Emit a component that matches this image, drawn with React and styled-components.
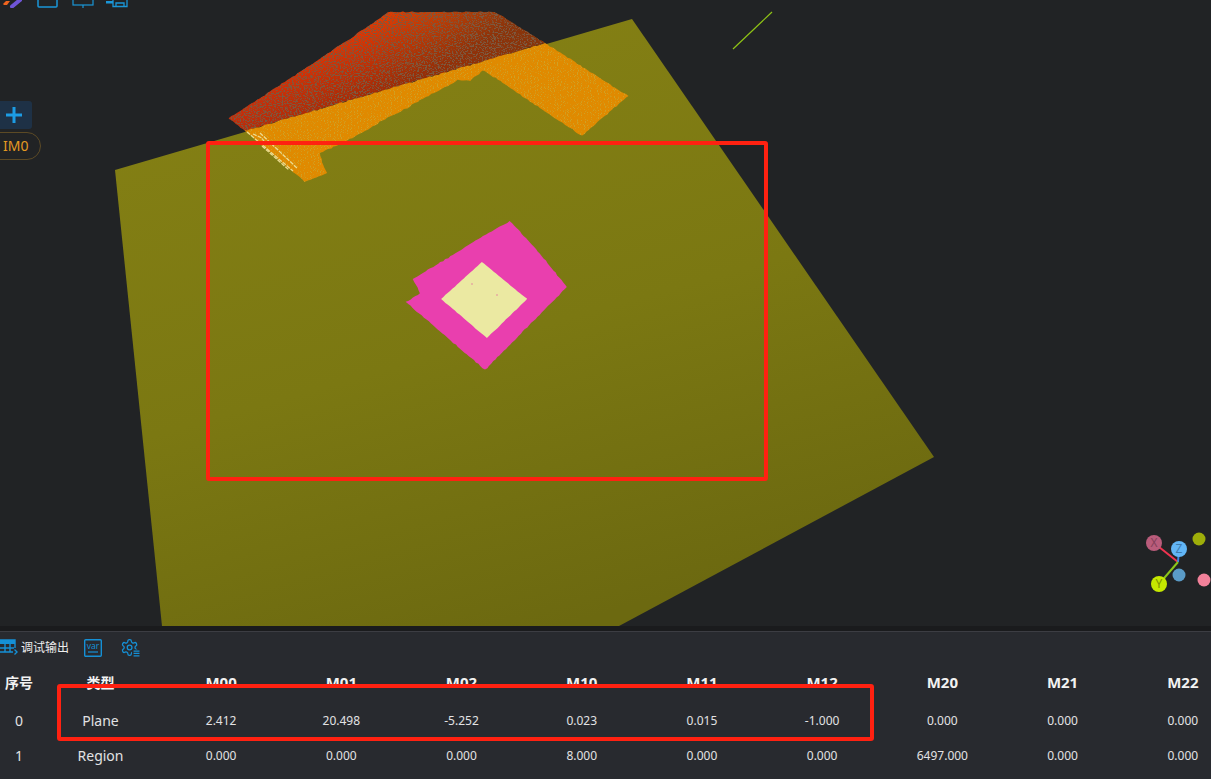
import React from 'react';
import styled, { createGlobalStyle } from 'styled-components';

const GlobalStyle = createGlobalStyle`
  html, body {
    margin: 0;
    padding: 0;
    height: 100%;
    overflow: hidden;
    background: #212325;
  }
  #root {
    height: 100%;
  }
`;

const Page = styled.div`
  display: flex;
  flex-direction: column;
  height: 779px;
  font-family: 'Noto Sans', 'Noto Sans CJK SC', sans-serif;
  color: #e4e4e6;
`;

const Viewport = styled.div`
  position: relative;
  height: 626px;
  flex: none;
  overflow: hidden;
  background: #212325;
`;

const SceneSvg = styled.svg`
  display: block;
  width: 100%;
  height: 100%;
`;

const Toolbar = styled.div`
  position: absolute;
  top: -16px;
  left: 0;
  display: flex;
  align-items: flex-end;
`;

const ToolIcon = styled.svg`
  display: block;
  flex: none;
  margin-left: ${({ $gap }) => $gap}px;
  color: #1a96d8;
`;

const AddButton = styled.button`
  position: absolute;
  left: 0;
  top: 101px;
  width: 32px;
  height: 28px;
  padding: 0 4px 0 0;
  border: 0;
  border-radius: 0 3px 3px 0;
  background: #1e3146;
  display: flex;
  align-items: center;
  justify-content: center;
`;

const ImagePill = styled.div`
  position: absolute;
  left: -20px;
  top: 132px;
  width: 61px;
  height: 28px;
  box-sizing: border-box;
  padding-left: 22px;
  border: 1px solid #5c4a25;
  border-radius: 14px;
  font-size: 14px;
  line-height: 26px;
  color: #e59a22;
`;

const Annotation = styled.div`
  position: absolute;
  left: ${({ $x }) => $x}px;
  top: ${({ $y }) => $y}px;
  width: ${({ $w }) => $w}px;
  height: ${({ $h }) => $h}px;
  box-sizing: border-box;
  border: 4px solid #ff2111;
  border-radius: 3px;
  pointer-events: none;
`;

const Divider = styled.div`
  flex: none;
  height: 5px;
  background: #1a1b1d;
`;

const Panel = styled.section`
  position: relative;
  flex: 1;
  min-height: 0;
  overflow: hidden;
  border-top: 1px solid #3c3d43;
  background: #282a2f;
`;

const Tabs = styled.div`
  display: flex;
  align-items: center;
  height: 29px;
  padding-top: 2px;
  box-sizing: border-box;
`;

const TabLabel = styled.span`
  margin-left: 3px;
  font-size: 12px;
  line-height: 16px;
  color: #eeeeee;
`;

const TabIcon = styled.svg`
  display: block;
  flex: none;
  margin-left: ${({ $gap }) => $gap || 0}px;
  color: #1590d6;
`;

const DataTable = styled.table`
  table-layout: fixed;
  width: 1243px;
  border-collapse: collapse;
  border-spacing: 0;

  th {
    height: 42px;
    padding: 0;
    font-size: 15px;
    font-weight: 700;
    color: #f2f2f2;
    text-align: center;
  }

  th.small {
    font-size: 14px;
  }

  td {
    height: 35px;
    padding: 0;
    font-size: 12px;
    color: #e2e2e4;
    text-align: center;
  }

  td.large {
    font-size: 14px;
  }

  th.shifted,
  td.shifted {
    padding-left: 2px;
  }
`;

const columns = [
  { name: '序号', width: 38, key: 'index', large: true },
  { name: '类型', width: 123, key: 'type', large: true, shifted: true },
  ...['M00', 'M01', 'M02', 'M10', 'M11', 'M12', 'M20', 'M21', 'M22'].map((name) => ({
    name,
    width: 120.2,
    key: name,
  })),
];

const rows = [
  {
    index: 0,
    type: 'Plane',
    M00: '2.412',
    M01: '20.498',
    M02: '-5.252',
    M10: '0.023',
    M11: '0.015',
    M12: '-1.000',
    M20: '0.000',
    M21: '0.000',
    M22: '0.000',
  },
  {
    index: 1,
    type: 'Region',
    M00: '0.000',
    M01: '0.000',
    M02: '0.000',
    M10: '8.000',
    M11: '0.000',
    M12: '0.000',
    M20: '6497.000',
    M21: '0.000',
    M22: '0.000',
  },
];

// roughen a polygon's edges so it reads like scanned point cloud data
const jagged = (points, amp, seed = 1) => {
  let s = seed;
  const rnd = () => {
    s = (s * 16807) % 2147483647;
    return s / 2147483647 - 0.5;
  };
  const out = [];
  points.forEach((p, i) => {
    const q = points[(i + 1) % points.length];
    const steps = Math.max(1, Math.round(Math.hypot(q[0] - p[0], q[1] - p[1]) / 3));
    for (let k = 0; k < steps; k++) {
      const t = k / steps;
      out.push(`${(p[0] + (q[0] - p[0]) * t + rnd() * amp).toFixed(1)},${(p[1] + (q[1] - p[1]) * t + rnd() * amp).toFixed(1)}`);
    }
  });
  return out.join(' ');
};

const PLANE = '115,170 632,19 934,457 619,626 162,626';
const RED_SCAN = jagged(
  [[229, 118], [300, 72], [345, 42], [373, 23], [388, 12], [495, 12], [545, 43], [245, 131]],
  0.9,
  7
);
const ORANGE_SCAN = jagged(
  [[245, 131], [545, 43], [628, 96], [582, 136], [483, 70], [470, 81], [458, 80], [440, 90], [420, 100], [407, 108], [385, 119], [370, 128], [345, 142], [320, 153], [323, 165], [327, 173], [305, 182]],
  1.1,
  23
);
const PINK_SCAN = jagged(
  [[510, 221], [536, 249], [567, 287], [485, 370], [406, 302], [420, 293], [413, 279], [443, 261], [478, 239]],
  0.8,
  41
);
const PALE_SCAN = jagged([[482, 262], [527, 299], [487, 338], [441, 299]], 0.4, 11);

const Scene = () => (
  <SceneSvg viewBox="0 0 1211 626">
    <defs>
      <linearGradient id="plane" gradientUnits="userSpaceOnUse" x1="400" y1="60" x2="560" y2="626">
        <stop offset="0" stopColor="#837f14" />
        <stop offset="0.5" stopColor="#7b7812" />
        <stop offset="1" stopColor="#6c6910" />
      </linearGradient>
      <linearGradient id="red" gradientUnits="userSpaceOnUse" x1="230" y1="120" x2="545" y2="40">
        <stop offset="0" stopColor="#d8300a" />
        <stop offset="0.45" stopColor="#ee3802" />
        <stop offset="0.7" stopColor="#e84a02" />
        <stop offset="1" stopColor="#c8560a" />
      </linearGradient>
      <linearGradient id="redShade" gradientUnits="userSpaceOnUse" x1="325" y1="35" x2="370" y2="110">
        <stop offset="0" stopColor="#5a1f0c" stopOpacity="0" />
        <stop offset="1" stopColor="#5a1f0c" stopOpacity="0.6" />
      </linearGradient>
      <filter id="speckleDark" x="0" y="0" width="100%" height="100%">
        <feTurbulence type="fractalNoise" baseFrequency="0.55 1.1" numOctaves="2" seed="4" />
        <feColorMatrix values="0 0 0 0 0.2  0 0 0 0 0.1  0 0 0 0 0.05  8 0 0 0 -4" />
      </filter>
      <filter id="speckleGreen" x="0" y="0" width="100%" height="100%">
        <feTurbulence type="fractalNoise" baseFrequency="0.7 1" numOctaves="2" seed="9" />
        <feColorMatrix values="0 0 0 0 0.5  0 0 0 0 0.5  0 0 0 0 0.08  9 0 0 0 -5" />
      </filter>
      <clipPath id="redClip">
        <polygon points={RED_SCAN} />
      </clipPath>
      <clipPath id="orangeClip">
        <polygon points={ORANGE_SCAN} />
      </clipPath>
    </defs>

    <polygon points={RED_SCAN} fill="url(#red)" />
    <polygon points={RED_SCAN} fill="url(#redShade)" />
    <g clipPath="url(#redClip)">
      <rect x="225" y="10" width="325" height="125" filter="url(#speckleDark)" />
    </g>

    <polygon points={PLANE} fill="url(#plane)" />

    <polygon points={ORANGE_SCAN} fill="#e08a00" />
    <g clipPath="url(#orangeClip)" opacity="0.45">
      <rect x="240" y="40" width="392" height="145" filter="url(#speckleGreen)" />
    </g>

    <g fill="none" stroke="#ecdc90" strokeWidth="1.3" strokeDasharray="4 1.2">
      <path d="M247 132 L293 171" />
      <path d="M260 133 L297 168" />
      <path d="M253 134 L262 138 L266 145" />
      <path d="M262 146 L289 170" />
    </g>

    <polygon points={PINK_SCAN} fill="#e93fae" />
    <polygon points={PALE_SCAN} fill="#ebe9a2" />
    <circle cx="472" cy="284" r="0.7" fill="#e06aa0" />
    <circle cx="497" cy="295" r="0.7" fill="#e06aa0" />

    <line x1="733" y1="49" x2="772" y2="12" stroke="#8fc415" strokeWidth="1.2" />

    <g fontFamily="'Noto Sans', sans-serif" fontSize="12" textAnchor="middle">
      <line x1="1154" y1="543" x2="1178" y2="562" stroke="#ef3350" strokeWidth="2" />
      <line x1="1178" y1="562" x2="1179" y2="549" stroke="#3f83e0" strokeWidth="2" />
      <line x1="1178" y1="562" x2="1159" y2="584" stroke="#8cc51a" strokeWidth="2" />
      <circle cx="1154" cy="543" r="8" fill="#b95c7b" />
      <text x="1154" y="547" fill="#84405a">X</text>
      <circle cx="1179" cy="549" r="8" fill="#62b6f6" />
      <text x="1179" y="553" fill="#3f7cae">Z</text>
      <circle cx="1159" cy="584" r="8" fill="#c6e800" />
      <text x="1159" y="588" fill="#7c9200">Y</text>
      <circle cx="1199" cy="539" r="6.5" fill="#9eae0a" />
      <circle cx="1179" cy="575" r="6.5" fill="#5a9bc7" />
      <circle cx="1204" cy="580" r="6.5" fill="#f2819a" />
    </g>
  </SceneSvg>
);

const TopToolbar = () => (
  <Toolbar>
    <ToolIcon $gap={3} width="19" height="23" viewBox="0 0 19 23">
      <path d="M0 19 L3 16 H7 L4 20 H1 Z" fill="#f0641e" />
      <path d="M9 21.5 L17 15" stroke="#6f55d8" strokeWidth="4" strokeLinecap="round" fill="none" />
    </ToolIcon>
    <ToolIcon $gap={15} width="21" height="23" viewBox="0 0 21 23" fill="none" stroke="currentColor" strokeWidth="1.5">
      <rect x="1" y="1" width="19" height="21" rx="1" />
    </ToolIcon>
    <ToolIcon $gap={14} width="22" height="24" viewBox="0 0 22 24" fill="none" stroke="currentColor" strokeWidth="1.2">
      <rect x="1" y="1" width="20" height="20" />
      <path d="M11 21 V24" />
    </ToolIcon>
    <ToolIcon $gap={12} width="22" height="23" viewBox="0 0 22 23" fill="none" stroke="currentColor" strokeWidth="1.3">
      <path d="M7 1 H21 V21.5 H7 Z" />
      <path d="M10 21.5 V18 H18 V21.5" />
      <path d="M0 16 H7 V18.5 H0 Z" fill="currentColor" stroke="none" />
    </ToolIcon>
  </Toolbar>
);

const TableIcon = () => (
  <TabIcon width="18" height="17" viewBox="0 0 18 17" fill="none" stroke="currentColor" strokeWidth="1.4">
    <path d="M0 1 H15 V9 M13 13 H0" />
    <path d="M0 1 H15 V5 H0 Z" fill="currentColor" stroke="none" />
    <path d="M0 9 H14 M5 1 V13 M10 1 V13" />
    <path d="M14.5 10.5 L17 13 L14.5 15.5" />
  </TabIcon>
);

const VarIcon = () => (
  <TabIcon $gap={15} width="18" height="18" viewBox="0 0 18 18" fill="none" stroke="currentColor">
    <rect x="0.7" y="0.7" width="16.6" height="16.6" rx="1" strokeWidth="1.4" />
    <text x="9" y="9.5" fontSize="8.5" fontFamily="'Noto Sans', sans-serif" textAnchor="middle" fill="currentColor" stroke="none">
      var
    </text>
    <path d="M4 13 H14" strokeWidth="1.2" />
  </TabIcon>
);

const GearIcon = () => (
  <TabIcon $gap={18} width="20" height="19" viewBox="0 0 25 24" fill="none" stroke="currentColor" strokeWidth="1.6">
    <path d="M12.22 2h-.44a2 2 0 0 0-2 2v.18a2 2 0 0 1-1 1.73l-.43.25a2 2 0 0 1-2 0l-.15-.08a2 2 0 0 0-2.73.73l-.22.38a2 2 0 0 0 .73 2.73l.15.1a2 2 0 0 1 1 1.72v.51a2 2 0 0 1-1 1.74l-.15.09a2 2 0 0 0-.73 2.73l.22.38a2 2 0 0 0 2.73.73l.15-.08a2 2 0 0 1 2 0l.43.25a2 2 0 0 1 1 1.73V20a2 2 0 0 0 2 2h.44a2 2 0 0 0 2-2v-.18a2 2 0 0 1 1-1.73l.43-.25a2 2 0 0 1 2 0l.15.08a2 2 0 0 0 2.73-.73l.22-.39a2 2 0 0 0-.73-2.73l-.15-.08a2 2 0 0 1-1-1.74v-.5a2 2 0 0 1 1-1.74l.15-.09a2 2 0 0 0 .73-2.73l-.22-.38a2 2 0 0 0-2.73-.73l-.15.08a2 2 0 0 1-2 0l-.43-.25a2 2 0 0 1-1-1.73V4a2 2 0 0 0-2-2z" />
    <circle cx="12" cy="12" r="3" />
    <rect x="15" y="14.5" width="10" height="9.5" fill="#282a2f" stroke="none" />
    <path d="M17 16.5 H24.5 M17 19.5 H24.5 M17 22.5 H24.5" strokeWidth="1.7" />
  </TabIcon>
);

const cellClass = (c) => `${c.large ? 'large small' : ''} ${c.shifted ? 'shifted' : ''}`.trim();

const App = () => (
  <Page>
    <GlobalStyle />
    <Viewport>
      <Scene />
      <TopToolbar />
      <AddButton aria-label="add">
        <svg width="16" height="16" viewBox="0 0 16 16">
          <path d="M8 0 V16 M0 8 H16" stroke="#1c9ce4" strokeWidth="3" />
        </svg>
      </AddButton>
      <ImagePill>IM0</ImagePill>
      <Annotation $x={206} $y={141} $w={562} $h={340} />
    </Viewport>
    <Divider />
    <Panel>
      <Tabs>
        <TableIcon />
        <TabLabel>调试输出</TabLabel>
        <VarIcon />
        <GearIcon />
      </Tabs>
      <DataTable>
        <colgroup>
          {columns.map((c) => (
            <col key={c.key} style={{ width: c.width }} />
          ))}
        </colgroup>
        <thead>
          <tr>
            {columns.map((c) => (
              <th key={c.key} className={cellClass(c)}>
                {c.name}
              </th>
            ))}
          </tr>
        </thead>
        <tbody>
          {rows.map((row) => (
            <tr key={row.index}>
              {columns.map((c) => (
                <td key={c.key} className={cellClass(c)}>
                  {row[c.key]}
                </td>
              ))}
            </tr>
          ))}
        </tbody>
      </DataTable>
      <Annotation $x={57} $y={52} $w={817} $h={57} />
    </Panel>
  </Page>
);

export default App;
